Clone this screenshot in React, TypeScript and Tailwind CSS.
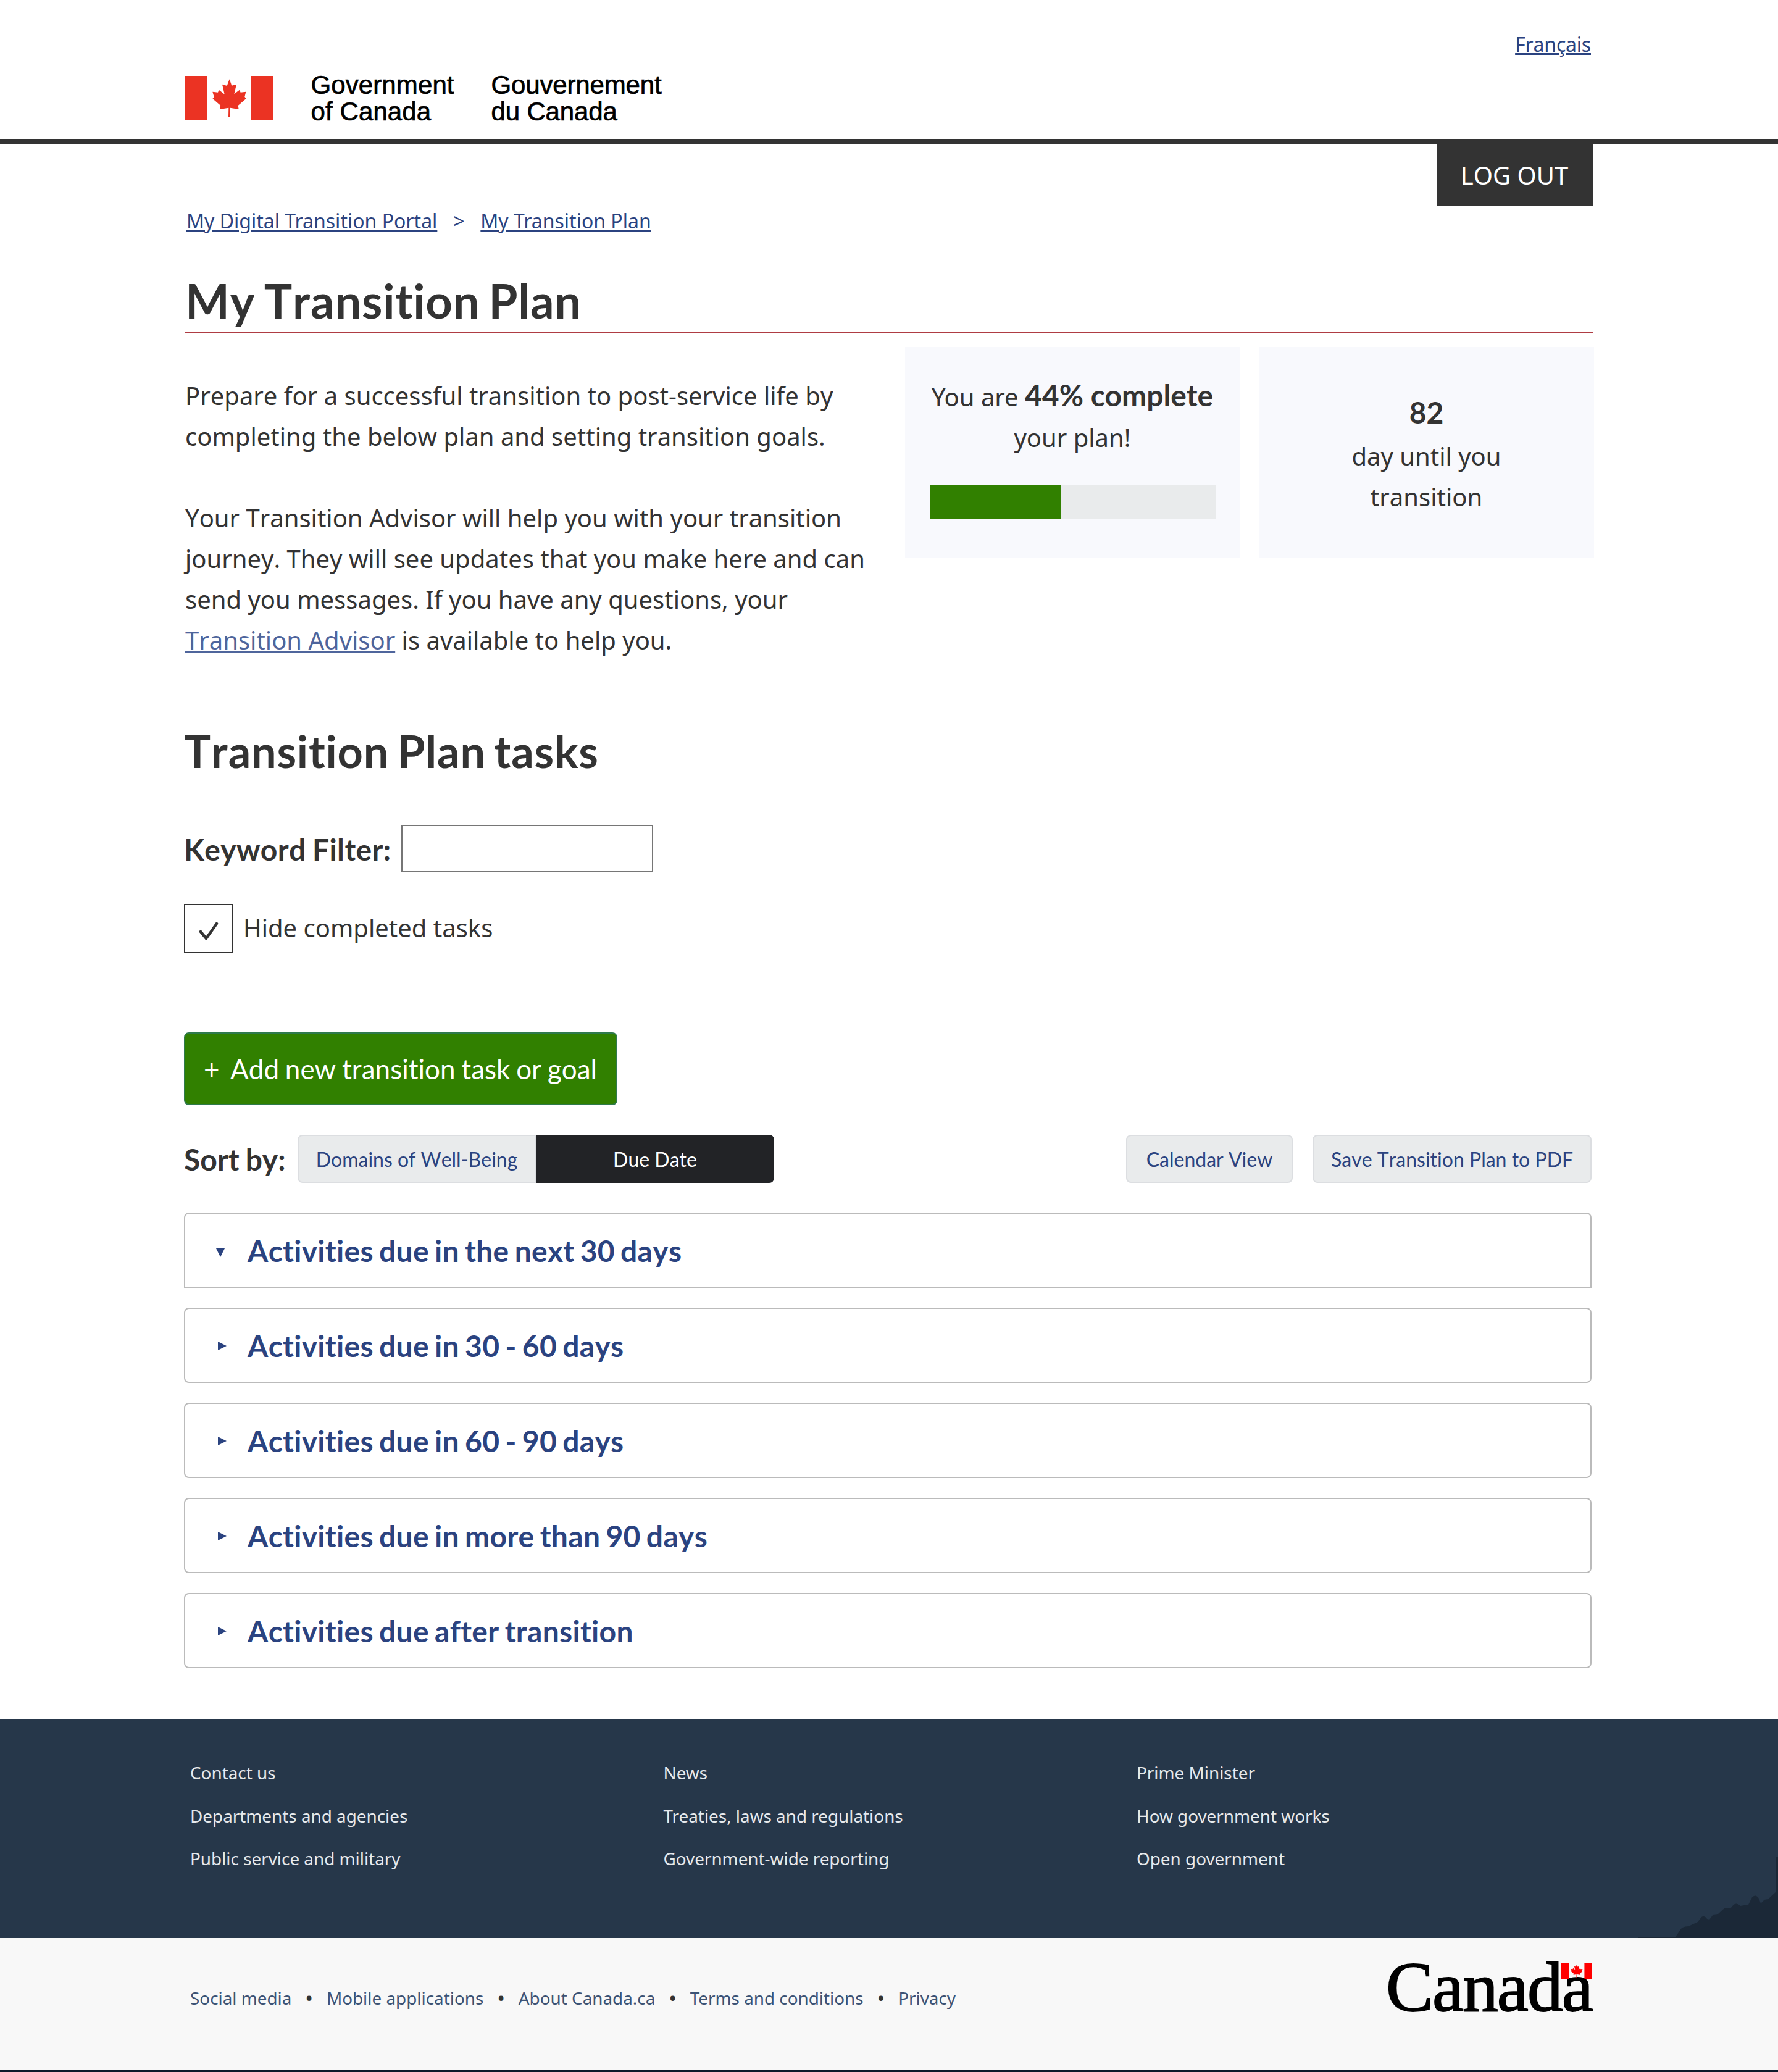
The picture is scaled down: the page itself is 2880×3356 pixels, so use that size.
const activities = [
  { title: 'Activities due in the next 30 days', open: true },
  { title: 'Activities due in 30 - 60 days', open: false },
  { title: 'Activities due in 60 - 90 days', open: false },
  { title: 'Activities due in more than 90 days', open: false },
  { title: 'Activities due after transition', open: false },
];

const footerColumns = [
  ['Contact us', 'Departments and agencies', 'Public service and military'],
  ['News', 'Treaties, laws and regulations', 'Government-wide reporting'],
  ['Prime Minister', 'How government works', 'Open government'],
];

const siteLinks = ['Social media', 'Mobile applications', 'About Canada.ca', 'Terms and conditions', 'Privacy'];

function Flag({ className }: { className: string }) {
  return (
    <svg className={className} viewBox="12 24 429 216" preserveAspectRatio="none" fill="currentColor" aria-hidden="true">
      <path d="M12 24h108v216H12zM333 24h108v216H333z" />
      <path d="M227 40L238 71L261 65L250 112L276 92L281 104L307 101L301 125L308 134L269 168L272 186L231 179V225H222L223 179L180 186L184 168L145 134L153 129L145 101L171 104L176 92L203 113L192 65L215 72Z" />
    </svg>
  );
}

function Header() {
  return (
    <header className="flex h-[233px] items-start justify-between border-b-8 border-[#333333] px-[300px]">
      <div className="flex pt-[116px] font-['Liberation_Sans',sans-serif] text-[42px] leading-[43px] whitespace-nowrap text-black [-webkit-text-stroke:0.7px_black]">
        <Flag className="mt-[7px] h-[72px] w-[143px] text-[#eb3323] [-webkit-text-stroke:0]" />
        <div className="ml-[60.5px] w-[292px] tracking-[0.1px]">
          Government
          <br />
          of Canada
        </div>
        <div className="tracking-[-0.15px]">
          Gouvernement
          <br />
          du Canada
        </div>
      </div>
      <a className="mr-[3px] pt-[48px] text-[32px] leading-[48px] tracking-[-0.2px] text-[#2b4380] underline">Français</a>
    </header>
  );
}

function Summary() {
  return (
    <div className="mt-[22px] flex items-start">
      <div className="w-[1166px] pt-[46px] text-[40px] leading-[66px] whitespace-nowrap">
        <p>
          Prepare for a successful transition to post-service life by
          <br />
          completing the below plan and setting transition goals.
        </p>
        <p className="mt-[66px]">
          Your Transition Advisor will help you with your transition
          <br />
          journey. They will see updates that you make here and can
          <br />
          send you messages. If you have any questions, your
          <br />
          <a className="text-[#4f659c] underline">Transition Advisor</a> is available to help you.
        </p>
      </div>
      <div className="flex gap-8">
        <div className="h-[342px] w-[542px] shrink-0 bg-[#f8f9fd] px-10 pt-12 text-center text-[40px] leading-[66px] whitespace-nowrap [font-kerning:auto]">
          You are <strong className="font-['Lato',sans-serif] text-[48px] leading-none font-bold">44% complete</strong>
          <br />
          your plan!
          <div className="mt-11 h-[54px] w-[464px] bg-[#e9ebec]">
            <div className="h-full w-[212px] bg-[#318000]" />
          </div>
        </div>
        <div className="h-[342px] w-[542px] shrink-0 bg-[#f8f9fd] pt-[73px] pr-[1px] text-center text-[40px] leading-[66px]">
          <strong className="block h-[71px] font-['Lato',sans-serif] text-[48px] font-bold">82</strong>
          day until you
          <br />
          transition
        </div>
      </div>
    </div>
  );
}

function Filters() {
  return (
    <>
      <h2 className="mt-[103px] font-['Lato',sans-serif] text-[72px] leading-[86px] font-bold tracking-[0.8px] [word-spacing:-4.5px]">
        Transition Plan tasks
      </h2>
      <div className="mt-[77px] flex items-start">
        <label className="w-[352px] pt-[11px] font-['Lato',sans-serif] text-[48px] leading-[58px] font-bold tracking-[0.35px] whitespace-nowrap [word-spacing:-1.5px]">
          Keyword Filter:
        </label>
        <input className="h-[76px] w-[408px] border-2 border-[#767676] bg-white" />
      </div>
      <div className="mt-[52px] flex items-start">
        <span className="flex h-20 w-20 items-center justify-center border-[2px] border-[#333333]">
          <svg className="mt-2 h-[30px] w-[32px]" viewBox="0 0 32 30" fill="none" stroke="#333333" strokeWidth="4.5" strokeLinecap="round" strokeLinejoin="round" aria-hidden="true">
            <path d="M3 16L12 27L29 3" />
          </svg>
        </span>
        <span className="ml-4 pt-[9px] text-[40px] leading-[60px]">Hide completed tasks</span>
      </div>
      <button className="mt-[128px] flex h-[118px] w-[702px] items-center rounded-lg border-2 border-[#2f7a4c] bg-[#318000] pl-[30px] font-['Lato',sans-serif] text-[44px] whitespace-nowrap text-white [word-spacing:-1.5px]">
        <span className="w-[43px] text-left">+</span>
        Add new transition task or goal
      </button>
    </>
  );
}

function SortBar() {
  return (
    <div className="mt-12 flex items-start font-['Lato',sans-serif] text-[32px] leading-[72px] text-[#2b4380] [word-spacing:-1.7px]">
      <span className="w-[184px] pt-[11px] text-[48px] leading-[58px] font-bold whitespace-nowrap text-[#333333]">Sort by:</span>
      <button className="h-[78px] w-[386px] rounded-l-lg border-2 border-[#dcdee1] bg-[#e9ebec] pt-[2px]">Domains of Well-Being</button>
      <button className="h-[78px] w-[386px] rounded-r-lg border-2 border-[#222326] bg-[#222326] pt-[2px] text-white">Due Date</button>
      <button className="ml-auto h-[78px] w-[270px] rounded-lg border-2 border-[#dcdee1] bg-[#e9ebec] pt-[2px]">Calendar View</button>
      <button className="ml-8 h-[78px] w-[452px] rounded-lg border-2 border-[#dcdee1] bg-[#e9ebec] pt-[2px]">Save Transition Plan to PDF</button>
    </div>
  );
}

function ActivityList() {
  return (
    <div className="mt-12 flex flex-col gap-8">
      {activities.map(({ title, open }) => (
        <div
          key={title}
          className={
            open
              ? 'flex h-[122px] items-center rounded-t-lg border-2 border-[#bbbbbb] pl-[49px]'
              : 'flex h-[122px] items-center rounded-lg border-2 border-[#bbbbbb] pl-[49px]'
          }
        >
          <svg className="h-[18px] w-[18px] shrink-0 overflow-visible text-[#2b4380]" viewBox="0 0 18 18" fill="currentColor" aria-hidden="true">
            {open ? <path d="M1 6H15L8 20Z" /> : <path d="M4 3L18 10L4 17Z" />}
          </svg>
          <span className="mt-[2px] ml-[34px] font-['Lato',sans-serif] text-[48px] leading-[58px] font-bold tracking-[0.3px] whitespace-nowrap text-[#2b4380] [word-spacing:-2.8px]">
            {title}
          </span>
        </div>
      ))}
    </div>
  );
}

function Footer() {
  return (
    <footer className="mt-[82px] text-[27.85px] leading-[42px] whitespace-nowrap [font-kerning:auto]">
      <div className="relative h-[355px] overflow-hidden bg-[#26374a] pt-[66px] pl-[308px] text-[#e6e9ec]">
        <div className="flex">
          {footerColumns.map((column) => (
            <ul key={column[0]} className="flex w-[766.5px] flex-col gap-[27.5px]">
              {column.map((item) => (
                <li key={item}>{item}</li>
              ))}
            </ul>
          ))}
        </div>
        <svg className="absolute right-0 bottom-0 h-[131px] w-[227px] text-[#1b2837]" viewBox="2653 3008 227 131" fill="currentColor" aria-hidden="true">
          <path d="M2653 3137H2714L2721 3127Q2724 3120 2735 3120L2750 3113L2756 3105Q2761 3102 2765 3108L2769 3109L2775 3101L2783 3100L2793 3091L2803 3091L2808 3085Q2813 3081 2819 3087L2832 3085L2838 3073Q2844 3067 2849 3075L2852 3083L2858 3077L2864 3076L2877 3064V3008H2880V3139H2653Z" />
        </svg>
      </div>
      <div className="flex h-[214px] items-start justify-between bg-[#f8f8f8] pr-[299px] pl-[308px] text-[#3c5375]">
        <ul className="flex pt-[76px]">
          {siteLinks.map((link, index) => (
            <li key={link} className="flex">
              {index > 0 && <span className="w-[56.5px] text-center text-[34px] text-[#333333]">•</span>}
              {link}
            </li>
          ))}
        </ul>
        <div className="relative mt-[26px] h-[104px] w-[335px]">
          <span className="-ml-[1px] block pt-[4px] font-['Liberation_Serif',serif] text-[115px] leading-[100px] tracking-[-1.8px] text-black [-webkit-text-stroke:1.8px_black]">
            Canada
          </span>
          <Flag className="absolute top-[15px] right-[2px] h-[25px] w-[50px] text-[#ff0000]" />
        </div>
      </div>
      <div className="h-[3px] bg-[#0b1a2b]" />
    </footer>
  );
}

export default function App() {
  return (
    <div className="h-[3356px] w-[2880px] overflow-hidden bg-white font-['Noto_Sans',sans-serif] text-[#333333] [font-kerning:none] [font-variant-ligatures:none]">
      <Header />
      <main className="pl-[300px]">
        <div className="flex w-[2280px] items-start justify-between">
          <nav className="mt-[101px] ml-[2px] flex text-[32px] leading-[48px] text-[#2b4380] [font-kerning:auto]">
            <a className="underline">My Digital Transition Portal</a>
            <span className="w-[70px] text-center">&gt;</span>
            <a className="underline">My Transition Plan</a>
          </nav>
          <button className="h-[101px] w-[252px] bg-[#333333] pt-[1px] pr-[2px] text-[40px] leading-[60px] text-white">LOG OUT</button>
        </div>
        <h1 className="mt-[59px] w-[2280px] border-b-2 border-[#af3c43] pb-[5px] font-['Lato',sans-serif] text-[76px] leading-[92px] font-bold tracking-[0.75px] [word-spacing:-5px]">
          My Transition Plan
        </h1>
        <Summary />
        <div className="-ml-[2px] w-[2280px]">
          <Filters />
          <SortBar />
          <ActivityList />
        </div>
      </main>
      <Footer />
    </div>
  );
}
